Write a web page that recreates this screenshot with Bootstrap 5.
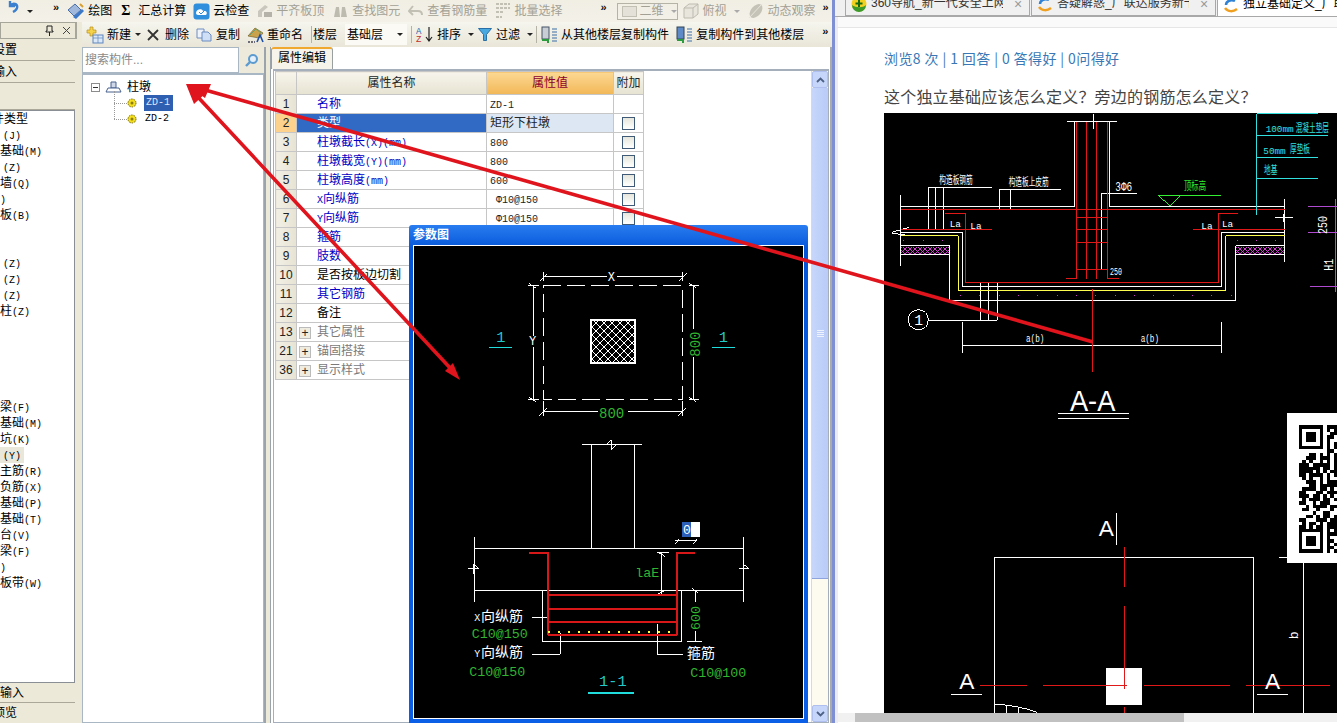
<!DOCTYPE html>
<html lang="zh-CN">
<head>
  <meta charset="UTF-8">
  <title>柱墩 属性编辑</title>
  <link href="https://cdn.jsdelivr.net/npm/bootstrap@5.3.0/dist/css/bootstrap.min.css" rel="stylesheet">
  <style>
    body { width: 1337px; height: 723px; overflow: hidden; position: relative; background: #fff; font: 12px/16px "Liberation Sans", "Noto Sans CJK SC", sans-serif; color: #000; }
    .lat { font-family: "Liberation Mono", monospace; font-size: 10px; line-height: 1; }
    .root-wrap { height: 723px; }
    .min-0 { min-width: 0; min-height: 0; }
    .gl-1 { margin-left: 1px; } .gl-3 { margin-left: 3px; } .gl-4 { margin-left: 4px; } .gl-5 { margin-left: 5px; } .gl-6 { margin-left: 6px; }
    .gl-7 { margin-left: 7px; } .gl-8 { margin-left: 8px; }
    .app-side { width: 835px; background: #ece9d8; border-right: 3px solid #7f8fd4; }
    .tb-top { height: 22px; background: linear-gradient(#f1efe4, #f3f1e8); padding-left: 8px; white-space: nowrap; overflow: hidden; }
    .tb-top svg, .tb-second svg { flex: none; }
    .tb-top span, .tb-second span { flex: none; }
    .tb-top .tool { margin-left: 8px; }
    .tb-top .tool.sum-tool { margin-left: 9px; gap: 8px; }
    .tb-top .tool.tight { margin-left: 7px; }
    .tb-top .tool.view-tool { margin-left: 4px; }
    .undo-mark { margin-top: -9px; }
    .sum-mark { font: bold 14px "Liberation Serif", serif; }
    .tool { display: flex; align-items: center; gap: 3px; flex: none; }
    .off { color: #a3a196; }
    .chev { font: bold 11px/10px "Liberation Sans", sans-serif; color: #111; margin-top: -8px; }
    .chev.c1 { margin-left: 20px; } .chev.c2 { margin-left: 38px; } .chev.c3 { margin-left: 7px; } .chev.c4 { margin-left: 18px; }
    .caret-mini { width: 0; height: 0; border: 3px solid transparent; border-top: 3px solid #222; border-bottom: 0; }
    .caret-mini.dim { border-top-color: #aaa; }
    .combo-2d { width: 61px; height: 17px; border: 1px solid #b5b2a6; margin-left: 10px; gap: 3px; padding-left: 4px; flex: none; }
    .lp { width: 77px; }
    .lp-head { height: 17px; background: #ece9d8; border: 1px solid #a7a69a; border-right-width: 2px; gap: 8px; padding-right: 4px; }
    .lp-tab { height: 22px; background: #ece9d8; border-bottom: 1px solid #aca899; line-height: 23px; overflow: hidden; margin-right: 2px; white-space: nowrap; }
    .lp-tab.blank { height: 27px; }
    .lp-tab.low { height: 20px; line-height: 20px; }
    .lp-tab.last { border-bottom: 0; }
    .lp-tab .cut { margin-left: -7px; }
    .lp-list { background: #fff; border: 1px solid #8a8f96; border-left: 0; margin-right: 2px; overflow: hidden; }
    .lp-list li { height: 16px; line-height: 16px; white-space: nowrap; }
    .lp-list .pad { padding-left: 3px; }
    .lp-list .cut { margin-left: -8px; }
    .lp-list .hl { background: #e9e6da; width: 24px; }
    .tb-second { height: 25px; padding-left: 3px; margin-left: 5px; background: linear-gradient(#f6f5ee, #e9e6d8); white-space: nowrap; overflow: hidden; }
    .vsep { width: 1px; height: 17px; background: #b5b2a6; }
    .floor-box { width: 62px; height: 21px; background: #fbfaf5; padding: 0 4px 0 2px; flex: none; }
    .pane-tree { width: 184px; margin-left: 5px; border-right: 2px solid #9ba3ad; }
    .tree-search { height: 26px; }
    .tree-search .form-control { width: 157px; height: 26px; border: 1px solid #a9b6c4; border-radius: 0; padding: 2px 2px; font-size: 12px; box-shadow: none; }
    .tree-search .form-control::placeholder { color: #8a8a8a; }
    .tree-search .find-btn { flex: 1; background: #eeeadb; }
    .tree-body { background: #fff; border: 1px solid #a9b6c4; border-top: 2px solid #a9b6c4; }
    .tree-line { height: 16px; }
    .tree-root { padding-left: 8px; }
    .tree-root svg { margin: 0 4px 0 5px; }
    .tree-minus { width: 9px; height: 9px; border: 1px solid #8c8c8c; position: relative; }
    .tree-minus::after { content: ""; position: absolute; left: 1px; right: 1px; top: 3px; height: 1px; background: #333; }
    .tree-kids { position: relative; padding-left: 31px; }
    .tree-kids::before { content: ""; position: absolute; left: 31px; top: -4px; height: 28px; border-left: 1px dotted #999; }
    .tree-dots { width: 13px; border-top: 1px dotted #999; }
    .tree-gap { gap: 7px; }
    .tree-gap svg { margin-left: -7px; }
    .tree-gap2 { gap: 8px; }
    .tree-gap2 svg { margin-left: -8px; }
    .tree-sel { background: #2f5fb0; color: #dfe6ff; padding: 0 3px 0 2px; height: 16px; line-height: 16px; }
    .pane-props { margin-left: 4px; background: #fff; border-right: 2px solid #a9abad; border-left: 1px solid #9ba3ad; }
    .prop-tabs { height: 22px; background: #fff; }
    .prop-tab { width: 62px; height: 22px; line-height: 19px; text-align: center; background: #f5f3ea; border: 1px solid #9a9f9f; border-top: 2px solid #f0a830; border-bottom: 0; border-radius: 3px 3px 0 0; font-size: 12px; }
    .prop-frame { border: 1px solid #a5afbc; border-top-width: 2px; margin: 0 1px 0 2px; padding-left: 1px; }
    .prop-table { width: 368px; table-layout: fixed; border-collapse: collapse; margin: 0; }
    .prop-table col.c-idx { width: 21px; } .prop-table col.c-nm { width: 190px; } .prop-table col.c-vl { width: 127px; } .prop-table col.c-ad { width: 30px; }
    .prop-table th, .prop-table td { border: 1px solid #c6c6c6; padding: 0; height: 19px; line-height: 17px; vertical-align: middle; font-weight: 400; font-size: 12px; background: #fff; box-shadow: none; overflow: hidden; white-space: nowrap; }
    .prop-table thead th { height: 23px; background: linear-gradient(#f7f5ec, #e7e3d2); text-align: center; }
    .prop-table thead th.val-head { background: linear-gradient(#fcd893, #f2b757); color: #8b0030; }
    .prop-table .idx { background: linear-gradient(90deg, #f2f0e6, #e7e3d3); text-align: center; color: #222; }
    .prop-table .nm { padding-left: 20px; color: #0000c4; }
    .prop-table .nm.blk { color: #000; }
    .prop-table .nm.grp { color: #7a7a7a; padding-left: 2px; }
    .prop-table .vl { padding-left: 3px; }
    .prop-table .idx.on { background: #fcd28c; }
    .prop-table .nm.on { background: #316ac5; color: #fff; }
    .prop-table .vl.on { background: #dde7f4; }
    .plus-box { display: inline-block; width: 12px; height: 12px; margin-right: 6px; border: 1px solid #bbb; background: #efede2; line-height: 10px; text-align: center; color: #222; font-size: 12px; vertical-align: -1px; }
    .mini-check { display: block; width: 13px; height: 13px; margin: 0 auto; border: 1px solid #3e5a76; background: linear-gradient(#e6e6dc, #fff); }
    .sb-v { width: 17px; margin-left: auto; background: #fdfbef; border-left: 1px solid #d3d9e8; }
    .sb-v .btn-up, .sb-v .btn-dn { height: 17px; background: #c6d6fb; border: 1px solid #aebff0; border-radius: 2px; }
    .sb-v .thumb { height: 491px; background: linear-gradient(90deg, #c6d6fb, #b9cbf7); border-bottom: 1px solid #8ea4dc; text-align: center; }
    .browser-side { min-width: 0; background: #fff; }
    .tab-strip { height: 17px; background: #f0f0f0; border-bottom: 1px solid #a8a8a8; padding-left: 10px; overflow: hidden; white-space: nowrap; }
    .b-tab { flex: none; height: 16px; width: 185px; margin-right: 1px; padding-left: 5px; background: #f0f0f0; border: 1px solid #a8a8a8; border-top: 0; color: #333; font-size: 12px; line-height: 14px; gap: 4px; overflow: hidden; }
    .b-tab.act { background: #fff; height: 17px; margin-bottom: -1px; border-bottom: 0; color: #000; width: 120px; margin-right: 0; border-right: 0; }
    .b-tab .tl { flex: 1; min-width: 0; overflow: hidden; margin-top: -9px; }
    .b-tab .cl { flex: none; color: #999; font-size: 14px; width: 22px; margin-top: -8px; text-align: center; }
    .b-tab svg { margin-top: -7px; flex: none; }
    .crumb-bar { height: 11px; background: #fafafa; border-bottom: 1px solid #e6e6e6; border-left: 3px solid #ecebf5; }
    .page-body { border-left: 3px solid #ecebf5; padding-left: 46px; }
    .q-stats { color: #3a78b5; font-size: 14px; line-height: 20px; margin-top: 20px; white-space: nowrap; letter-spacing: .4px; font-family: "Noto Sans CJK SC", sans-serif; }
    .q-title { color: #444; font-size: 16px; line-height: 24px; margin-top: 16px; margin-bottom: 5px; white-space: nowrap; letter-spacing: .2px; font-family: "Noto Sans CJK SC", sans-serif; }
    .cad-shot { height: 600px; background: #000; position: relative; overflow: hidden; }
    .sb-h { height: 9px; background: #f1f1f1; margin-left: -46px; padding-left: 17px; }
    .sb-h div { width: 329px; height: 9px; background: #c1c1c1; }
    .qr-card { position: absolute; right: 0; top: 300px; width: 50px; height: 150px; background: #fff; padding: 11px 0 0 12px; overflow: hidden; }
    .param-dlg { position: absolute; left: 409px; top: 225px; width: 399px; height: 498px; background: linear-gradient(#2a7cf0, #0455d8 5%, #0a5fe6); border-radius: 3px 3px 0 0; padding: 0 4px 2px 4px; }
    .param-title { height: 20px; color: #fff; font-weight: 700; font-size: 12px; line-height: 21px; }
    .param-view { height: 474px; background: #000; border: 1px solid #fff; }
    .over-arrows { position: absolute; left: 0; top: 0; pointer-events: none; }
    svg text { font-family: "Liberation Mono", "Noto Sans CJK SC", monospace; }
    svg text.cn-t, svg tspan.cn-t { font-family: "Noto Sans CJK SC", sans-serif; }
    svg text.sans-t { font-family: "Liberation Sans", sans-serif; }
  </style>
</head>
<body>
<div class="root-wrap d-flex">

  <!-- drawing software -->
  <div class="app-side d-flex flex-column flex-shrink-0">
    <div class="tb-top d-flex align-items-center">
      <svg class="undo-mark" width="11" height="14" viewBox="0 0 11 14"><path d="M2 1v5h5M2 6c3-4 8-2 7 2-.4 2-2 3-4 4" fill="none" stroke="#3a7fd0" stroke-width="2.400"/></svg>
      <span class="caret-mini ms-2"></span>
      <span class="chev c1">»</span>
      <div class="tool"><svg width="18" height="18" viewBox="0 0 18 18"><path d="M1 8l7-6 6 6-7 6z" fill="#9fb8dc" stroke="#4a6ea8"/><path d="M6 15l9-8 2 2-8 8z" fill="#3c78c8"/><path d="M13 2l3 3" stroke="#d8a030" stroke-width="2"/></svg><span>绘图</span></div>
      <div class="tool sum-tool"><b class="sum-mark">Σ</b><span>汇总计算</span></div>
      <div class="tool tight"><svg width="17" height="17" viewBox="0 0 17 17"><rect x=".5" y=".5" width="16" height="16" rx="3" fill="#2f8fdc"/><path d="M3 10c0-4 6-5 7-2 3-1 5 2 3 4H5c-1 0-2-1-2-2z" fill="#fff"/><path d="M6 9l2 2 4-4" stroke="#2f8fdc" fill="none"/></svg><span>云检查</span></div>
      <div class="tool off"><svg width="16" height="16" viewBox="0 0 16 16"><path d="M1 14V8l7-6 3 2-6 5v5z" fill="#c9c7bd"/><rect x="7" y="9" width="8" height="5" fill="#b5b3a9"/></svg><span>平齐板顶</span></div>
      <div class="tool off"><svg width="17" height="16" viewBox="0 0 17 16"><path d="M2 14l2-10h3l1 10zM9 14l1-10h3l2 10z" fill="#bdbbb0"/></svg><span>查找图元</span></div>
      <div class="tool off"><svg width="16" height="14" viewBox="0 0 16 14"><path d="M5 2L1 7l4 4M1 7h9c3 0 4 2 4 4" fill="none" stroke="#c2c0b5" stroke-width="2"/></svg><span>查看钢筋量</span></div>
      <div class="tool off"><svg width="16" height="16" viewBox="0 0 16 16"><path d="M1 1h14M1 5h14M1 9h8M1 14h6" stroke="#c2c0b5" stroke-width="2" stroke-dasharray="3 1"/></svg><span>批量选择</span></div>
      <span class="chev c2">»</span>
      <div class="combo-2d d-flex align-items-center off"><svg width="15" height="11" viewBox="0 0 15 11"><rect x=".5" y=".5" width="14" height="10" fill="#e4e2d8" stroke="#c2c0b5"/></svg><span>二维</span><span class="caret-mini dim ms-1"></span></div>
      <div class="tool off view-tool"><svg width="18" height="18" viewBox="0 0 18 18"><path d="M2 6l5-4h9v10l-5 4H2z" fill="#e8e6dc" stroke="#bdbbb0"/><path d="M2 6h9v10M11 6l5-4" fill="none" stroke="#bdbbb0"/></svg><span>俯视</span><span class="caret-mini dim ms-1"></span></div>
      <div class="tool off tight"><svg width="18" height="18" viewBox="0 0 18 18"><ellipse cx="9" cy="9" rx="5" ry="8" transform="rotate(40 9 9)" fill="#c5c3b8"/><path d="M2 16L15 2" stroke="#e8e6dc"/></svg><span>动态观察</span></div>
      <span class="chev c3">»</span>
    </div>

    <div class="d-flex flex-grow-1 min-0">
      <!-- left module list -->
      <div class="lp d-flex flex-column flex-shrink-0">
        <div class="lp-head d-flex align-items-center justify-content-end">
          <svg width="9" height="11" viewBox="0 0 9 11"><path d="M2 1h5v5h1v1H1V6h1zM4.500 7v4" fill="none" stroke="#222"/></svg>
          <svg width="9" height="9" viewBox="0 0 9 9"><path d="M1 1l7 7M8 1L1 8" stroke="#444"/></svg>
        </div>
        <div class="lp-tab"><div class="cut">设置</div></div>
        <div class="lp-tab"><div class="cut">输入</div></div>
        <div class="lp-tab blank"></div>
        <ul class="lp-list list-unstyled mb-0 flex-grow-1">
          <li><span class="d-block cut">件类型</span></li>
          <li class="pad"><span class="lat">(J)</span></li>
          <li>基础<span class="lat">(M)</span></li>
          <li class="pad"><span class="lat">(Z)</span></li>
          <li>墙<span class="lat">(Q)</span></li>
          <li><span class="lat">)</span></li>
          <li>板<span class="lat">(B)</span></li>
          <li></li><li></li>
          <li class="pad"><span class="lat">(Z)</span></li>
          <li class="pad"><span class="lat">(Z)</span></li>
          <li class="pad"><span class="lat">(Z)</span></li>
          <li>柱<span class="lat">(Z)</span></li>
          <li></li><li></li><li></li><li></li><li></li>
          <li>梁<span class="lat">(F)</span></li>
          <li>基础<span class="lat">(M)</span></li>
          <li>坑<span class="lat">(K)</span></li>
          <li class="pad hl"><span class="lat">(Y)</span></li>
          <li>主筋<span class="lat">(R)</span></li>
          <li>负筋<span class="lat">(X)</span></li>
          <li>基础<span class="lat">(P)</span></li>
          <li>基础<span class="lat">(T)</span></li>
          <li>台<span class="lat">(V)</span></li>
          <li>梁<span class="lat">(F)</span></li>
          <li><span class="lat">)</span></li>
          <li>板带<span class="lat">(W)</span></li>
        </ul>
        <div class="lp-tab low">输入</div>
        <div class="lp-tab low last"><div class="cut">预览</div></div>
      </div>

      <!-- component area -->
      <div class="d-flex flex-column flex-grow-1 min-0">
        <div class="tb-second d-flex align-items-center">
          <div class="tool"><svg width="19" height="18" viewBox="0 0 19 18"><path d="M5 1v3H2v3h3v3h3V7h3V4H8V1z" fill="#f4d24a" stroke="#b89020" stroke-width=".7"/><rect x="8" y="9" width="10" height="8" fill="#dbe8f8" stroke="#5f86bd"/><path d="M8 12h10M13 9v8" stroke="#5f86bd" stroke-width=".7"/></svg><span>新建</span><span class="caret-mini gl-1"></span></div>
          <svg class="gl-6" width="12" height="12" viewBox="0 0 12 12"><path d="M1 1l10 10M11 1L1 11" stroke="#333" stroke-width="1.800"/></svg>
          <span class="gl-6">删除</span>
          <div class="tool gl-7"><svg width="16" height="14" viewBox="0 0 16 14"><path d="M1 1h7v9H1z" fill="#eef3fb" stroke="#6c8cc0"/><path d="M6 4h6l3 3v6H6z" fill="#cfe0f6" stroke="#6c8cc0"/></svg><span class="gl-1">复制</span></div>
          <div class="tool gl-7"><svg width="17" height="17" viewBox="0 0 17 17"><path d="M1 10L8 2l8 5-4 5z" fill="#c9a24a" stroke="#75612a" stroke-width=".7"/><path d="M3 9l6-6 5 4" fill="none" stroke="#6aa06a"/><path d="M10 16l3-7 3 7" fill="none" stroke="#1c4fa8" stroke-width="1.600"/><path d="M1 16h7" stroke="#445" stroke-width="1.500" stroke-dasharray="2 1"/></svg><span>重命名</span></div>
          <span class="vsep gl-8"></span>
          <span class="gl-1">楼层</span>
          <div class="floor-box gl-8 d-flex align-items-center justify-content-between"><span>基础层</span><span class="caret-mini"></span></div>
          <span class="vsep gl-4"></span>
          <div class="tool gl-4"><svg width="18" height="17" viewBox="0 0 18 17"><text x="0" y="8" font-size="9" fill="#2b5fb0">A</text><text x="0" y="16" font-size="9" fill="#c03030">Z</text><path d="M13 1v13M10 11l3 4 3-4" fill="none" stroke="#222" stroke-width="1.200"/></svg><span>排序</span><span class="caret-mini gl-4"></span></div>
          <div class="tool gl-4"><svg width="14" height="13" viewBox="0 0 14 13"><path d="M.5 .5h13L8.500 6.500v6h-3v-6z" fill="#48a8e0" stroke="#2a6fa5"/></svg><span class="gl-1">过滤</span><span class="caret-mini gl-4"></span></div>
          <span class="vsep gl-3"></span>
          <div class="tool gl-4"><svg width="17" height="17" viewBox="0 0 17 17"><rect x="1" y="1" width="7" height="12" fill="#c9cdd4" stroke="#456"/><path d="M11 3h5M11 6h5M11 9h5M11 12h5M11 15h5" stroke="#3a6ea8"/><path d="M1 14h6v3" fill="none" stroke="#2c9a3e" stroke-width="2"/></svg><span>从其他楼层复制构件</span></div>
          <div class="tool gl-7"><svg width="17" height="17" viewBox="0 0 17 17"><rect x="1" y="1" width="7" height="12" fill="#5f8ac8" stroke="#345"/><path d="M11 3h5M11 6h5M11 9h5M11 12h5M11 15h5" stroke="#3a6ea8"/><path d="M1 14h6v3" fill="none" stroke="#2c9a3e" stroke-width="2"/></svg><span>复制构件到其他楼层</span></div>
          <span class="chev c4">»</span>
        </div>

        <div class="d-flex flex-grow-1 min-0">
          <div class="pane-tree d-flex flex-column flex-shrink-0">
            <div class="tree-search input-group flex-nowrap">
              <input class="form-control flex-grow-0" placeholder="搜索构件...">
              <div class="find-btn d-flex align-items-center justify-content-center"><svg width="15" height="15" viewBox="0 0 15 15"><circle cx="9" cy="6" r="4" fill="#e6f0fa" stroke="#5b9bd0" stroke-width="2"/><path d="M6 9l-4 4" stroke="#5b9bd0" stroke-width="2.400"/></svg></div>
            </div>
            <div class="tree-body flex-grow-1">
              <div class="tree-line tree-root d-flex align-items-center mt-1"><span class="tree-minus"></span><svg width="18" height="12" viewBox="0 0 18 12"><path d="M6 1h5v6H6z" fill="#cfd8e8" stroke="#48618d"/><path d="M1 11l2-4h11l2 4z" fill="#fff" stroke="#48618d"/></svg><span>柱墩</span></div>
              <div class="tree-kids">
                <div class="tree-line tree-gap d-flex align-items-center"><span class="tree-dots"></span><svg width="10" height="10" viewBox="0 0 10 10"><circle cx="5" cy="5" r="4" fill="#f4de20" stroke="#756a10" stroke-dasharray="1.500 1"/><circle cx="5" cy="5" r="1.500" fill="#8a7c10"/></svg><span class="tree-sel lat">ZD-1</span></div>
                <div class="tree-line tree-gap2 d-flex align-items-center"><span class="tree-dots"></span><svg width="10" height="10" viewBox="0 0 10 10"><circle cx="5" cy="5" r="4" fill="#f4de20" stroke="#756a10" stroke-dasharray="1.500 1"/><circle cx="5" cy="5" r="1.500" fill="#8a7c10"/></svg><span class="lat">ZD-2</span></div>
              </div>
            </div>
          </div>

          <div class="pane-props d-flex flex-column flex-grow-1 min-0">
            <div class="prop-tabs"><div class="prop-tab">属性编辑</div></div>
            <div class="prop-frame d-flex flex-grow-1 min-0">
              <table class="table prop-table align-self-start">
                <colgroup><col class="c-idx"><col class="c-nm"><col class="c-vl"><col class="c-ad"></colgroup>
                <thead><tr><th></th><th>属性名称</th><th class="val-head">属性值</th><th>附加</th></tr></thead>
                <tbody>
                  <tr><td class="idx">1</td><td class="nm">名称</td><td class="vl"><span class="lat">ZD-1</span></td><td></td></tr>
                  <tr><td class="idx on">2</td><td class="nm on">类型</td><td class="vl on">矩形下柱墩</td><td><span class="mini-check"></span></td></tr>
                  <tr><td class="idx">3</td><td class="nm">柱墩截长<span class="lat">(X)(mm)</span></td><td class="vl"><span class="lat">800</span></td><td><span class="mini-check"></span></td></tr>
                  <tr><td class="idx">4</td><td class="nm">柱墩截宽<span class="lat">(Y)(mm)</span></td><td class="vl"><span class="lat">800</span></td><td><span class="mini-check"></span></td></tr>
                  <tr><td class="idx">5</td><td class="nm">柱墩高度<span class="lat">(mm)</span></td><td class="vl"><span class="lat">600</span></td><td><span class="mini-check"></span></td></tr>
                  <tr><td class="idx">6</td><td class="nm"><span class="lat">X</span>向纵筋</td><td class="vl"><span class="lat">&nbsp;Ф10@150</span></td><td><span class="mini-check"></span></td></tr>
                  <tr><td class="idx">7</td><td class="nm"><span class="lat">Y</span>向纵筋</td><td class="vl"><span class="lat">&nbsp;Ф10@150</span></td><td><span class="mini-check"></span></td></tr>
                  <tr><td class="idx">8</td><td class="nm">箍筋</td><td class="vl"></td><td></td></tr>
                  <tr><td class="idx">9</td><td class="nm">肢数</td><td class="vl"></td><td></td></tr>
                  <tr><td class="idx">10</td><td class="nm blk">是否按板边切割</td><td class="vl"></td><td></td></tr>
                  <tr><td class="idx">11</td><td class="nm">其它钢筋</td><td class="vl"></td><td></td></tr>
                  <tr><td class="idx">12</td><td class="nm blk">备注</td><td class="vl"></td><td></td></tr>
                  <tr><td class="idx">13</td><td class="nm grp"><span class="plus-box">+</span>其它属性</td><td class="vl"></td><td></td></tr>
                  <tr><td class="idx">21</td><td class="nm grp"><span class="plus-box">+</span>锚固搭接</td><td class="vl"></td><td></td></tr>
                  <tr><td class="idx">36</td><td class="nm grp"><span class="plus-box">+</span>显示样式</td><td class="vl"></td><td></td></tr>
                </tbody>
              </table>
              <div class="sb-v d-flex flex-column flex-shrink-0">
                <div class="btn-up d-flex align-items-center justify-content-center"><svg width="9" height="6" viewBox="0 0 9 6"><path d="M1 5l3.500-3.500L8 5" fill="none" stroke="#4d6185" stroke-width="1.800"/></svg></div>
                <div class="thumb d-flex align-items-center justify-content-center"><svg width="7" height="7" viewBox="0 0 7 7"><path d="M0 .5h7M0 2.500h7M0 4.500h7M0 6.500h7" stroke="#eef2fd"/></svg></div>
                <div class="flex-grow-1"></div>
                <div class="btn-dn d-flex align-items-center justify-content-center"><svg width="9" height="6" viewBox="0 0 9 6"><path d="M1 1l3.500 3.500L8 1" fill="none" stroke="#4d6185" stroke-width="1.800"/></svg></div>
              </div>
            </div>
          </div>
        </div>
      </div>
    </div>
  </div>

  <!-- browser -->
  <div class="browser-side d-flex flex-column flex-grow-1">
    <div class="tab-strip d-flex">
      <div class="b-tab d-flex align-items-center"><svg width="16" height="16" viewBox="0 0 16 16"><circle cx="8" cy="8" r="7.500" fill="#f2d020"/><path d="M1 9a7 7 0 0 0 14 0c-3 3-10 3-14 0z" fill="#3c9a2a"/><path d="M8 4v7M4.500 7.500h7" stroke="#146a10" stroke-width="2"/></svg><span class="tl">360导航_新一代安全上网</span><span class="cl">×</span></div>
      <div class="b-tab d-flex align-items-center"><svg width="16" height="16" viewBox="0 0 16 16"><path d="M3 8c0-4 5-6 9-4" fill="none" stroke="#2f82d6" stroke-width="2.500"/><path d="M2 11c3 4 8 4 12 1" fill="none" stroke="#f0a020" stroke-width="2.500"/></svg><span class="tl">答疑解惑_广联达服务新干</span><span class="cl">×</span></div>
      <div class="b-tab act d-flex align-items-center"><svg width="16" height="16" viewBox="0 0 16 16"><path d="M3 8c0-4 5-6 9-4" fill="none" stroke="#2f82d6" stroke-width="2.500"/><path d="M2 11c3 4 8 4 12 1" fill="none" stroke="#f0a020" stroke-width="2.500"/></svg><span class="tl">独立基础定义_广联</span></div>
    </div>
    <div class="crumb-bar"></div>
    <div class="page-body d-flex flex-column flex-grow-1 min-0">
      <div class="q-stats">浏览8 次 | 1 回答 | 0 答得好 | 0问得好</div>
      <div class="q-title">这个独立基础应该怎么定义？旁边的钢筋怎么定义？</div>
      <div class="cad-shot">
        <svg width="453" height="600" viewBox="884 114 453 600" shape-rendering="crispEdges">
          <defs>
            <pattern id="purpleHatch" width="15" height="15" patternUnits="userSpaceOnUse"><path d="M0 0l15 15M15 0L0 15" stroke="#d23ad2" stroke-width="3"/></pattern>
          </defs>
          <g transform="translate(880,110) scale(.33333)" fill="none" stroke="#fff" stroke-width="3">
            <!-- top section -->
            <rect x="62" y="413" width="147" height="24" fill="url(#purpleHatch)" stroke="none"/>
            <rect x="1067" y="413" width="147" height="24" fill="url(#purpleHatch)" stroke="none"/>
            <path d="M562 38H710M585 38V293H62M690 38V293H1214M62 258V470M1214 270V458M62 371H248V533H1024V371H1214M62 411H209V574H1067V411H1214M62 437H209M1067 437H1214"/>
            <path d="M640 15V60M35 370L88 355M35 372L88 380M1185 327H1238M1212 315V340"/>
            <path d="M145 363V235H335M168 363V235M190 363V235M358 301V243H542M391 301V243M664 483V253H770M664 483H685"/>
            <path d="M302 518V634M325 518V634M352 518V634H147"/>
            <circle cx="115" cy="632" r="30"/>
            <path d="M248 640V733M1025 640V733M248 709H1025"/>
            <path d="M535 915H747M535 928H747"/>
            <path stroke="#ffff50" d="M62 381H235V545H1037V381H1214"/>
            <g stroke="#e01818">
              <path d="M62 301H1214M62 363H335M940 363H1214M195 315H258V522H1015V315H1075"/>
              <path d="M590 38V510M620 38V510M650 38V510M682 38V510M590 327H682M590 363H682M590 400H682M590 483H682M557 508H590M682 508H717M638 540V790"/>
            </g>
            <path stroke="#33e0e0" d="M1130 15V317M1130 15H1315M1130 79H1345M1130 145H1315M1130 208H1315"/>
            <path stroke="#33f033" d="M835 259H1022M835 259L870 291L902 259"/>
            <path stroke="#b04ad0" d="M1367 270V550M1285 293H1371M1285 371H1371M1290 532H1371"/>
            <path stroke="#c23ac2" stroke-width="4" stroke-dasharray="3 55" d="M70 395H210M240 560H1060M1070 395H1210"/>
            <g fill="#fff" stroke="none">
              <text class="cn-t" font-size="20" transform="translate(178,224) scale(1,1.700)">构造板钢筋</text>
              <text class="cn-t" font-size="20" transform="translate(386,232) scale(1,1.700)">构造板上皮筋</text>
              <text font-size="28" transform="translate(706,245) scale(1,1.300)">3Ф6</text>
              <text font-size="20" transform="translate(690,498) scale(1,1.500)">250</text>
              <text x="209" y="354" font-size="28">La</text>
              <text x="271" y="361" font-size="28">La</text>
              <text x="964" y="361" font-size="28">La</text>
              <text x="1026" y="354" font-size="28">La</text>
              <text font-size="23" transform="translate(438,700) scale(1,1.400)">a(b)</text>
              <text font-size="23" transform="translate(782,700) scale(1,1.400)">a(b)</text>
              <text x="103" y="648" font-size="44">1</text>
              <text class="sans-t" x="570" y="905" font-size="90" textLength="136" lengthAdjust="spacingAndGlyphs">A-A</text>
              <text font-size="30" transform="translate(1340,375) rotate(-90) scale(1,1.300)">250</text>
              <text font-size="30" transform="translate(1358,485) rotate(-90) scale(1,1.300)">H1</text>
            </g>
            <text class="cn-t" font-size="22" fill="#33f033" stroke="none" transform="translate(912,244) scale(1,1.500)">顶标高</text>
            <g fill="#33e0e0" stroke="none">
              <text x="1157" y="70" font-size="28">100mm</text><text class="cn-t" font-size="20" transform="translate(1247,68) scale(1,1.700)">混凝土垫层</text>
              <text x="1150" y="134" font-size="28">50mm</text><text class="cn-t" font-size="20" transform="translate(1230,132) scale(1,1.700)">厚垫板</text>
              <text class="cn-t" font-size="20" transform="translate(1152,196) scale(1,1.700)">地基</text>
            </g>
          </g>
          <g transform="translate(880,400) scale(.33333)" fill="none" stroke="#fff" stroke-width="3">
            <path d="M710 342V438M344 945V475H1121V945M1197 475H1221M1270 490V945M213 888H305M1131 888H1223M344 915V945M344 915Q420 920 470 940M380 918V945M415 924V945"/>
            <rect x="678" y="807" width="108" height="110" fill="#fff" stroke="none"/>
            <path stroke="#e01818" d="M733 445V565M733 620V870M733 925V945M300 861H440M490 861H740M792 861H1050M1097 861H1350"/>
            <g fill="#fff" stroke="none" font-size="68">
              <text class="sans-t" x="656" y="412">A</text>
              <text class="sans-t" x="238" y="870">A</text>
              <text class="sans-t" x="1155" y="870">A</text>
              <text class="sans-t" transform="translate(1255,720) rotate(-90)" font-size="40">b</text>
            </g>
          </g>
        </svg>
        <div class="qr-card"><svg id="qrCode" width="38" height="130" viewBox="0 0 38.500 129.500" shape-rendering="crispEdges"></svg></div>
      </div>
      <div class="sb-h"><div></div></div>
    </div>
  </div>
</div>

<!-- floating parameter drawing -->
<div class="param-dlg d-flex flex-column">
  <div class="param-title">参数图</div>
  <div class="param-view">
    <svg width="389" height="472" viewBox="414 247 389 472" shape-rendering="crispEdges">
      <defs>
        <pattern id="cadHatch" width="8" height="8" patternUnits="userSpaceOnUse"><path d="M0 0l8 8M8 0L0 8" stroke="#fff"/></pattern>
      </defs>
      <g transform="translate(405,225) scale(.33333)" fill="none" stroke="#fff" stroke-width="3">
        <rect x="415" y="184" width="418" height="342" stroke-dasharray="54 18"/>
        <rect x="559" y="289" width="131" height="129" fill="#000" stroke="none"/>
        <path d="M415 145V170M833 145V170M415 157H605M635 157H833M405 170L427 148M823 170L845 148M385 184V335M385 368V526M370 184H402M370 526H402M372 178L392 192M372 520L392 532M851 184H881M851 526H881M866 184V315M866 400V526M853 178L873 192M853 520L873 532M415 563H578M668 563H833M415 530V575M833 530V575M403 575L425 553M821 575L843 553"/>
        <path stroke="#20dcdc" stroke-width="5" d="M252 371H321M921 371H990"/>
        <path d="M531 661H711M559 661V750M689 661V750M606 661L620 647V677L634 661"/>
        <g fill="#fff" stroke="none" font-size="36"><text x="608" y="171">X</text><text x="372" y="364">Y</text></g>
        <g fill="#2fb52f" stroke="none" font-size="42"><text x="582" y="583">800</text><text transform="translate(886,398) rotate(-90)">800</text></g>
        <g fill="#20c8c8" stroke="none" font-size="46"><text x="274" y="354">1</text><text x="941" y="354">1</text></g>
      </g>
      <rect x="591" y="321" width="44" height="43" fill="url(#cadHatch)" stroke="#fff" stroke-width="1.500"/>
      <g transform="translate(405,470) scale(.33333)" fill="none" stroke="#fff" stroke-width="3">
        <path d="M559 0V238M689 0V238M208 238H1015M208 365H1015M208 205V398M1015 205V398M190 300H222L205 285V315M1002 300H1032L1015 285V315"/>
        <path d="M412 365V517H830V365M382 445H429M382 556H466V492M757 465V556H835"/>
        <path d="M770 252V375M755 252H792M760 375L780 365M760 250L780 262M810 216H875M810 226L822 210M865 226L877 210M872 365V400M872 485V520M860 355L878 372M846 518H890"/>
        <path stroke="#d81818" stroke-width="6" d="M372 252H429V497H816V252H870" stroke-linejoin="round"/>
        <path stroke="#d81818" stroke-width="4" d="M429 378H816M429 420H816M429 459H816"/>
        <path stroke="#ffff40" stroke-width="6" stroke-dasharray="6 24" d="M430 488H810"/>
        <path stroke="#20dcdc" stroke-width="5" d="M549 672H687"/>
        <g fill="#fff" stroke="none" font-size="42">
          <text x="208" y="456"><tspan font-size="30">X</tspan><tspan class="cn-t" dx="2">向纵筋</tspan></text>
          <text x="208" y="565"><tspan font-size="30">Y</tspan><tspan class="cn-t" dx="2">向纵筋</tspan></text>
          <text class="cn-t" x="846" y="568">箍筋</text>
        </g>
        <g fill="#2fb52f" stroke="none" font-size="40">
          <text x="200" y="506">C10@150</text>
          <text x="193" y="620">C10@150</text>
          <text x="856" y="624">C10@100</text>
          <text x="691" y="323">laE</text>
          <text transform="translate(884,483) rotate(-90)">600</text>
        </g>
        <text x="582" y="652" font-size="46" fill="#20c8c8" stroke="none">1-1</text>
      </g>
      <rect x="682" y="523" width="18" height="15" fill="#fff"/>
      <rect x="682" y="523" width="9" height="15" fill="#2c5fb8"/>
      <text x="683" y="535" font-size="13" fill="#fff">0</text>
    </svg>
  </div>
</div>

<!-- red annotation arrows -->
<svg class="over-arrows" width="1337" height="723" viewBox="0 0 1337 723">
  <path d="M1093 342L198 88M196 95L452 370" stroke="#e0141c" stroke-width="3.600" fill="none"/>
  <path d="M186 84L211 84L205 98zM186 84L207 92L194 104z" fill="#e0141c"/>
  <path d="M460 380L445 371L453 363z" fill="#e0141c"/>
</svg>

<script>
  // QR modules, cut off at the right edge of the window like the screenshot
  var qrRows = [
    "#######.###","#.....#.#.#","#.###.#..##","#.###.#.##.","#.###.#.#..","#.....#.#.#","#######.#.#",
    "........##.","...##.#.#.#","..###.###.#",".#.#..#.#.#","###.#####.#","######.##.#","####.#.#.##",
    "##.####.#.#",".#.#..#.#..","..###.#.###","...##.#####",".####.##.#.","##...##.###","###.##.#.#.",
    ".#.###.##.#","##..#.###..","..#.####.##",".##..#...#.","....#..##..","..##.#.##.#","##...###.##",
    ".#.##.#.###","##.#.##.###","#######.#.#","#.....#.###","#.###.#.#..","#.###.#.##.","#.###.#.#.#",
    "#.....#.##.","#######.#.#"
  ];
  var qrSvg = document.getElementById('qrCode');
  var qrMarkup = '';
  qrRows.forEach(function (row, y) {
    row.split('').forEach(function (cell, x) {
      if (cell === '#') qrMarkup += '<rect x="' + (x * 3.5) + '" y="' + (y * 3.5) + '" width="3.5" height="3.5"/>';
    });
  });
  qrSvg.innerHTML = qrMarkup;
</script>
<script src="https://cdn.jsdelivr.net/npm/bootstrap@5.3.0/dist/js/bootstrap.bundle.min.js"></script>
</body>
</html>
